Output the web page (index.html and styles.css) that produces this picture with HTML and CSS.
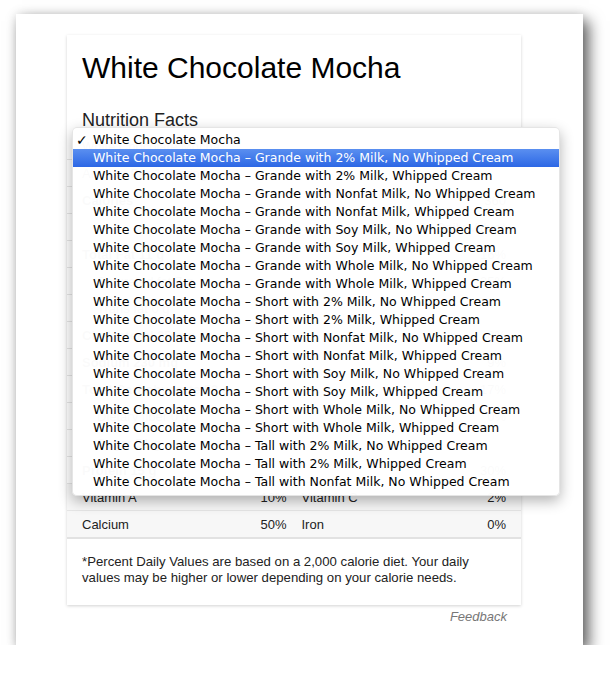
FILE: index.html
```html
<!DOCTYPE html>
<html>
<head>
<meta charset="utf-8">
<link rel="stylesheet" href="styles.css">
</head>
<body>
<div class="window">
  <div class="card">
    <h1 class="title">White Chocolate Mocha</h1>
    <h2 class="subtitle">Nutrition Facts</h2>
    <div class="table">
      <div class="row select-row"><span>White Chocolate Mocha</span></div>
      <div class="row"><span>Amount Per 1 serving</span></div>
      <div class="row"><span class="b">Calories</span><span>360</span></div>
      <div class="row right"><span>% Daily Value*</span></div>
      <div class="row"><span class="b">Total Fat 11 g</span><span>16%</span></div>
      <div class="row ind"><span>Saturated fat 7 g</span><span>35%</span></div>
      <div class="row ind"><span>Trans fat 0 g</span></div>
      <div class="row"><span class="b">Cholesterol 25 mg</span><span>8%</span></div>
      <div class="row"><span class="b">Sodium 230 mg</span><span>9%</span></div>
      <div class="row"><span class="b">Total Carbohydrate 53 g</span><span>17%</span></div>
      <div class="row ind"><span>Dietary fiber 0 g</span><span>0%</span></div>
      <div class="row ind"><span>Sugar 51 g</span></div>
      <div class="row"><span class="b">Protein 15 g</span><span>30%</span></div>
      <div class="row pair">
        <div class="half"><span>Vitamin A</span><span>10%</span></div>
        <div class="half"><span>Vitamin C</span><span>2%</span></div>
      </div>
      <div class="row pair last">
        <div class="half"><span>Calcium</span><span>50%</span></div>
        <div class="half"><span>Iron</span><span>0%</span></div>
      </div>
    </div>
    <p class="note">*Percent Daily Values are based on a 2,000 calorie diet. Your daily values may be higher or lower depending on your calorie needs.</p>
  </div>
  <div class="feedback">Feedback</div>

  <ul class="menu">
    <li class="checked">White Chocolate Mocha</li>
    <li class="active">White Chocolate Mocha – Grande with 2% Milk, No Whipped Cream</li>
    <li>White Chocolate Mocha – Grande with 2% Milk, Whipped Cream</li>
    <li>White Chocolate Mocha – Grande with Nonfat Milk, No Whipped Cream</li>
    <li>White Chocolate Mocha – Grande with Nonfat Milk, Whipped Cream</li>
    <li>White Chocolate Mocha – Grande with Soy Milk, No Whipped Cream</li>
    <li>White Chocolate Mocha – Grande with Soy Milk, Whipped Cream</li>
    <li>White Chocolate Mocha – Grande with Whole Milk, No Whipped Cream</li>
    <li>White Chocolate Mocha – Grande with Whole Milk, Whipped Cream</li>
    <li>White Chocolate Mocha – Short with 2% Milk, No Whipped Cream</li>
    <li>White Chocolate Mocha – Short with 2% Milk, Whipped Cream</li>
    <li>White Chocolate Mocha – Short with Nonfat Milk, No Whipped Cream</li>
    <li>White Chocolate Mocha – Short with Nonfat Milk, Whipped Cream</li>
    <li>White Chocolate Mocha – Short with Soy Milk, No Whipped Cream</li>
    <li>White Chocolate Mocha – Short with Soy Milk, Whipped Cream</li>
    <li>White Chocolate Mocha – Short with Whole Milk, No Whipped Cream</li>
    <li>White Chocolate Mocha – Short with Whole Milk, Whipped Cream</li>
    <li>White Chocolate Mocha – Tall with 2% Milk, No Whipped Cream</li>
    <li>White Chocolate Mocha – Tall with 2% Milk, Whipped Cream</li>
    <li>White Chocolate Mocha – Tall with Nonfat Milk, No Whipped Cream</li>
  </ul>
</div>
</body>
</html>
```

FILE: styles.css
```css
html, body {
  margin: 0;
  padding: 0;
  background: #ffffff;
}

body {
  font-family: "Liberation Sans", Arial, sans-serif;
  color: #222;
}

.window {
  position: relative;
  margin: 14px 0 0 16px;
  width: 567px;
  height: 631px;
  box-sizing: border-box;
  padding: 21px 62px 0 51px;
  background: #ffffff;
  box-shadow: 6px 7px 14px rgba(0, 0, 0, 0.6), 0 0 10px rgba(0, 0, 0, 0.12);
}

.card {
  width: 454px;
  height: 570px;
  box-sizing: border-box;
  padding-top: 12px;
  background: #fff;
  box-shadow: 0 1px 3px rgba(0, 0, 0, 0.18);
}

.title {
  margin: 0;
  padding: 0 15px;
  font-size: 30px;
  line-height: 41px;
  font-weight: normal;
  color: #000;
}

.subtitle {
  margin: 21px 0 0;
  padding: 0 15px;
  font-size: 18px;
  line-height: 22px;
  font-weight: normal;
  color: #222;
}

.table {
  margin-top: 2px;
  font-size: 13px;
}

.row {
  display: flex;
  justify-content: space-between;
  align-items: center;
  height: 26px;
  padding: 0 15px;
  border-bottom: 1px solid #e6e6e6;
  color: #222;
}

.row.right {
  justify-content: flex-end;
}

.row.ind {
  padding-left: 30px;
}

.row .b {
  font-weight: bold;
}

.row.pair {
  padding: 0 15px 0 0;
  background: #f7f7f7;
}

.row.pair.last {
  border-bottom: 2px solid #e2e2e2;
}

.half {
  flex: 1;
  display: flex;
  justify-content: space-between;
  padding-left: 15px;
}

.note {
  margin: 0;
  padding: 15px 40px 0 15px;
  font-size: 13.2px;
  line-height: 16px;
  color: #222;
}

.feedback {
  width: 454px;
  box-sizing: border-box;
  padding: 4px 14px 0 0;
  text-align: right;
  font-size: 13px;
  font-style: italic;
  color: #777;
}

.menu {
  position: absolute;
  left: 56px;
  top: 113px;
  width: 488px;
  margin: 0;
  padding: 3px 0 4px;
  list-style: none;
  box-sizing: border-box;
  background: rgba(255, 255, 255, 0.98);
  border: 1px solid rgba(0, 0, 0, 0.1);
  border-radius: 5px;
  box-shadow: 0 5px 14px rgba(0, 0, 0, 0.3);
  font-family: "DejaVu Sans", sans-serif;
  font-size: 12.5px;
  color: #000;
}

.menu li {
  position: relative;
  height: 18px;
  line-height: 18px;
  padding-left: 20px;
  white-space: nowrap;
}

.menu li.checked::before {
  content: "✓";
  position: absolute;
  left: 3px;
  top: 0;
  font-size: 14px;
  font-weight: bold;
}

.menu li.active {
  background: linear-gradient(#5a8ff0, #2c67e5);
  color: #fff;
}
```
